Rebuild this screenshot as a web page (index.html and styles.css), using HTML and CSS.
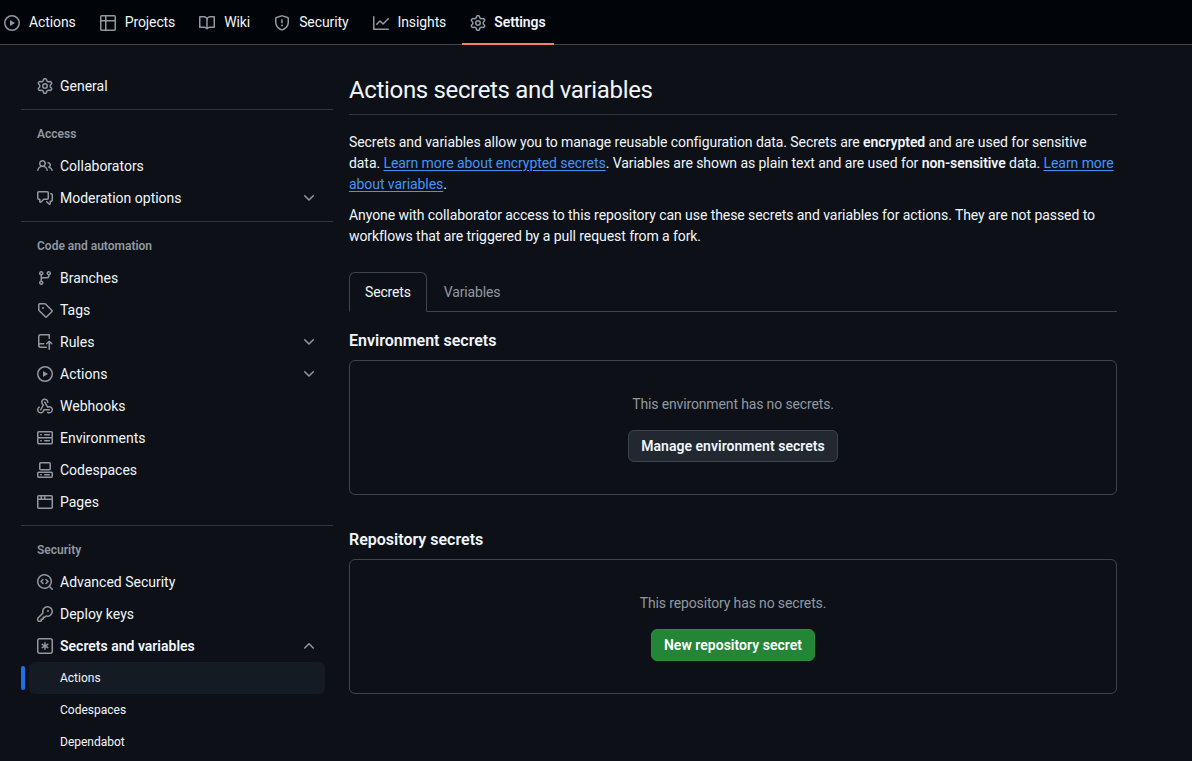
FILE: index.html
```html
<!DOCTYPE html>
<html lang="en">
<head>
<meta charset="utf-8">
<title>Actions secrets and variables</title>
<link rel="stylesheet" href="styles.css">
</head>
<body>
<svg class="sprite" aria-hidden="true">
<symbol id="i-play" viewBox="0 0 16 16"><path d="M8 0a8 8 0 1 1 0 16A8 8 0 0 1 8 0ZM1.5 8a6.5 6.5 0 1 0 13 0 6.5 6.5 0 0 0-13 0Zm4.879-2.773 4.264 2.559a.25.25 0 0 1 0 .428l-4.264 2.559A.25.25 0 0 1 6 10.559V5.442a.25.25 0 0 1 .379-.215Z"/></symbol>
<symbol id="i-table" viewBox="0 0 16 16"><path d="M0 1.75C0 .784.784 0 1.75 0h12.5C15.216 0 16 .784 16 1.75v12.5A1.75 1.75 0 0 1 14.25 16H1.75A1.75 1.75 0 0 1 0 14.25ZM6.5 6.5v8h7.75a.25.25 0 0 0 .25-.25V6.5Zm8-1.5V1.75a.25.25 0 0 0-.25-.25H6.5V5Zm-13 1.5v7.75c0 .138.112.25.25.25H5v-8ZM5 5V1.5H1.75a.25.25 0 0 0-.25.25V5Z"/></symbol>
<symbol id="i-book" viewBox="0 0 16 16"><path d="M0 1.75A.75.75 0 0 1 .75 1h4.253c1.227 0 2.317.59 3 1.501A3.743 3.743 0 0 1 11.006 1h4.245a.75.75 0 0 1 .75.75v10.5a.75.75 0 0 1-.75.75h-4.507a2.25 2.25 0 0 0-1.591.659l-.622.621a.75.75 0 0 1-1.06 0l-.622-.621A2.25 2.25 0 0 0 5.258 13H.75a.75.75 0 0 1-.75-.75Zm7.251 10.324.004-5.073-.002-2.253A2.25 2.25 0 0 0 5.003 2.5H1.5v9h3.757a3.75 3.75 0 0 1 1.994.574ZM8.755 4.75l-.004 7.322a3.752 3.752 0 0 1 1.992-.572H14.5v-9h-3.495a2.25 2.25 0 0 0-2.25 2.25Z"/></symbol>
<symbol id="i-shield" viewBox="0 0 16 16"><path d="M7.467.133a1.748 1.748 0 0 1 1.066 0l5.25 1.68A1.75 1.75 0 0 1 15 3.48V7c0 1.566-.32 3.182-1.303 4.682-.983 1.498-2.585 2.813-5.032 3.855a1.697 1.697 0 0 1-1.33 0c-2.447-1.042-4.049-2.357-5.032-3.855C1.32 10.182 1 8.566 1 7V3.48a1.75 1.75 0 0 1 1.217-1.667Zm.61 1.429a.25.25 0 0 0-.153 0l-5.25 1.68a.25.25 0 0 0-.174.238V7c0 1.358.275 2.666 1.057 3.86.784 1.194 2.121 2.34 4.366 3.297a.196.196 0 0 0 .154 0c2.245-.956 3.582-2.104 4.366-3.298C13.225 9.666 13.5 8.36 13.5 7V3.48a.251.251 0 0 0-.174-.237l-5.25-1.68ZM8.75 4.75v3a.75.75 0 0 1-1.5 0v-3a.75.75 0 0 1 1.5 0ZM9 10.5a1 1 0 1 1-2 0 1 1 0 0 1 2 0Z"/></symbol>
<symbol id="i-graph" viewBox="0 0 16 16"><path d="M1.5 1.75V13.5h13.75a.75.75 0 0 1 0 1.5H.75a.75.75 0 0 1-.75-.75V1.75a.75.75 0 0 1 1.5 0Zm14.28 2.53-5.25 5.25a.75.75 0 0 1-1.06 0L7 7.06 4.28 9.78a.751.751 0 0 1-1.042-.018.751.751 0 0 1-.018-1.042l3.25-3.25a.75.75 0 0 1 1.06 0L10 7.94l4.72-4.72a.751.751 0 0 1 1.042.018.751.751 0 0 1 .018 1.042Z"/></symbol>
<symbol id="i-gear" viewBox="0 0 16 16"><path d="M8 0a8.2 8.2 0 0 1 .701.031C9.444.095 9.99.645 10.16 1.29l.288 1.107c.018.066.079.158.212.224.231.114.454.243.668.386.123.082.233.09.299.071l1.103-.303c.644-.176 1.392.021 1.82.63.27.385.506.792.704 1.218.315.675.111 1.422-.364 1.891l-.814.806c-.049.048-.098.147-.088.294.016.257.016.515 0 .772-.01.147.038.246.088.294l.814.806c.475.469.679 1.216.364 1.891a7.977 7.977 0 0 1-.704 1.217c-.428.61-1.176.807-1.82.63l-1.102-.302c-.067-.019-.177-.011-.3.071a5.909 5.909 0 0 1-.668.386c-.133.066-.194.158-.211.224l-.29 1.106c-.168.646-.715 1.196-1.458 1.26a8.006 8.006 0 0 1-1.402 0c-.743-.064-1.289-.614-1.458-1.26l-.289-1.106c-.018-.066-.079-.158-.212-.224a5.738 5.738 0 0 1-.668-.386c-.123-.082-.233-.09-.299-.071l-1.103.303c-.644.176-1.392-.021-1.82-.63a8.12 8.12 0 0 1-.704-1.218c-.315-.675-.111-1.422.363-1.891l.815-.806c.05-.048.098-.147.088-.294a6.214 6.214 0 0 1 0-.772c.01-.147-.038-.246-.088-.294l-.815-.806C.635 6.045.431 5.298.746 4.623a7.92 7.92 0 0 1 .704-1.217c.428-.61 1.176-.807 1.82-.63l1.102.302c.067.019.177.011.3-.071.214-.143.437-.272.668-.386.133-.066.194-.158.211-.224l.29-1.106C6.009.645 6.556.095 7.299.03 7.53.01 7.764 0 8 0Zm-.571 1.525c-.036.003-.108.036-.137.146l-.289 1.105c-.147.561-.549.967-.998 1.189-.173.086-.34.183-.5.29-.417.278-.97.423-1.529.27l-1.103-.303c-.109-.03-.175.016-.195.045-.22.312-.412.644-.573.99-.014.031-.021.11.059.19l.815.806c.411.406.562.957.53 1.456a4.709 4.709 0 0 0 0 .582c.032.499-.119 1.05-.53 1.456l-.815.806c-.081.08-.073.159-.059.19.162.346.353.677.573.989.02.03.085.076.195.046l1.102-.303c.56-.153 1.113-.008 1.53.27.161.107.328.204.501.29.447.222.85.629.997 1.189l.289 1.105c.029.109.101.143.137.146a6.6 6.6 0 0 0 1.142 0c.036-.003.108-.036.137-.146l.289-1.105c.147-.561.549-.967.998-1.189.173-.086.34-.183.5-.29.417-.278.97-.423 1.529-.27l1.103.303c.109.029.175-.016.195-.045.22-.313.411-.644.573-.99.014-.031.021-.11-.059-.19l-.815-.806c-.411-.406-.562-.957-.53-1.456a4.709 4.709 0 0 0 0-.582c-.032-.499.119-1.05.53-1.456l.815-.806c.081-.08.073-.159.059-.19a6.464 6.464 0 0 0-.573-.989c-.02-.03-.085-.076-.195-.046l-1.102.303c-.56.153-1.113.008-1.53-.27a4.44 4.44 0 0 0-.501-.29c-.447-.222-.85-.629-.997-1.189l-.289-1.105c-.029-.11-.101-.143-.137-.146a6.6 6.6 0 0 0-1.142 0ZM11 8a3 3 0 1 1-6 0 3 3 0 0 1 6 0ZM9.5 8a1.5 1.5 0 1 0-3.001.001A1.5 1.5 0 0 0 9.5 8Z"/></symbol>
<symbol id="i-people" viewBox="0 0 16 16"><path d="M2 5.5a3.5 3.5 0 1 1 5.898 2.549 5.508 5.508 0 0 1 3.034 4.084.75.75 0 1 1-1.482.235 4 4 0 0 0-7.9 0 .75.75 0 0 1-1.482-.236A5.507 5.507 0 0 1 3.102 8.05 3.493 3.493 0 0 1 2 5.5ZM11 4a3.001 3.001 0 0 1 2.22 5.018 5.01 5.01 0 0 1 2.56 3.012.749.749 0 0 1-.885.954.752.752 0 0 1-.549-.514 3.507 3.507 0 0 0-2.522-2.372.75.75 0 0 1-.574-.73v-.352a.75.75 0 0 1 .416-.672A1.5 1.5 0 0 0 11 5.5.75.75 0 0 1 11 4Zm-5.5-.5a2 2 0 1 0-.001 3.999A2 2 0 0 0 5.5 3.5Z"/></symbol>
<symbol id="i-comment" viewBox="0 0 16 16"><path d="M1.75 1h8.5c.966 0 1.75.784 1.75 1.75v5.5A1.75 1.75 0 0 1 10.25 10H7.061l-2.574 2.573A1.458 1.458 0 0 1 2 11.543V10h-.25A1.75 1.75 0 0 1 0 8.25v-5.5C0 1.784.784 1 1.75 1ZM1.5 2.75v5.5c0 .138.112.25.25.25h1a.75.75 0 0 1 .75.75v2.19l2.72-2.72a.749.749 0 0 1 .53-.22h3.5a.25.25 0 0 0 .25-.25v-5.5a.25.25 0 0 0-.25-.25h-8.5a.25.25 0 0 0-.25.25Zm13 2a.25.25 0 0 0-.25-.25h-.5a.75.75 0 0 1 0-1.5h.5c.966 0 1.75.784 1.75 1.75v5.5A1.75 1.75 0 0 1 14.25 12H14v1.543a1.458 1.458 0 0 1-2.487 1.03L9.22 12.28a.749.749 0 0 1 .326-1.275.749.749 0 0 1 .734.215l2.22 2.22v-2.19a.75.75 0 0 1 .75-.75h1a.25.25 0 0 0 .25-.25Z"/></symbol>
<symbol id="i-branch" viewBox="0 0 16 16"><path d="M9.5 3.25a2.25 2.25 0 1 1 3 2.122V6A2.5 2.5 0 0 1 10 8.5H6a1 1 0 0 0-1 1v1.128a2.251 2.251 0 1 1-1.5 0V5.372a2.25 2.25 0 1 1 1.5 0v1.836A2.493 2.493 0 0 1 6 7h4a1 1 0 0 0 1-1v-.628A2.25 2.25 0 0 1 9.5 3.25Zm-6 0a.75.75 0 1 0 1.5 0 .75.75 0 0 0-1.5 0Zm8.25-.75a.75.75 0 1 0 0 1.5.75.75 0 0 0 0-1.5ZM4.25 12a.75.75 0 1 0 0 1.5.75.75 0 0 0 0-1.5Z"/></symbol>
<symbol id="i-tag" viewBox="0 0 16 16"><path d="M1 7.775V2.75C1 1.784 1.784 1 2.75 1h5.025c.464 0 .91.184 1.238.513l6.25 6.25a1.75 1.75 0 0 1 0 2.474l-5.026 5.026a1.75 1.75 0 0 1-2.474 0l-6.25-6.25A1.752 1.752 0 0 1 1 7.775Zm1.5 0c0 .066.026.13.073.177l6.25 6.25a.25.25 0 0 0 .354 0l5.025-5.025a.25.25 0 0 0 0-.354l-6.25-6.25a.25.25 0 0 0-.177-.073H2.75a.25.25 0 0 0-.25.25ZM6 5a1 1 0 1 1 0 2 1 1 0 0 1 0-2Z"/></symbol>
<symbol id="i-push" viewBox="0 0 16 16"><path d="M1 2.5A2.5 2.5 0 0 1 3.5 0h8.75a.75.75 0 0 1 .75.75v3.5a.75.75 0 0 1-1.5 0V1.5h-8a1 1 0 0 0-1 1v6.708A2.493 2.493 0 0 1 3.5 9h3.25a.75.75 0 0 1 0 1.5H3.5a1 1 0 0 0 0 2h5.75a.75.75 0 0 1 0 1.5H3.5A2.5 2.5 0 0 1 1 11.5Zm13.23 7.79h-.001l-1.224-1.224v6.184a.75.75 0 0 1-1.5 0V9.066L10.28 10.29a.75.75 0 0 1-1.06-1.061l2.505-2.504a.75.75 0 0 1 1.06 0L15.29 9.23a.751.751 0 0 1-.018 1.042.751.751 0 0 1-1.042.018Z"/></symbol>
<symbol id="i-webhook" viewBox="0 0 16 16"><path d="M5.5 4.25a2.25 2.25 0 0 1 4.5 0 .75.75 0 0 0 1.5 0 3.75 3.75 0 1 0-6.14 2.889l-2.272 4.258a.75.75 0 0 0 1.324.706L7 7.25a.75.75 0 0 0-.309-1.015A2.25 2.25 0 0 1 5.5 4.25Z"/><path d="M7.364 3.607a.75.75 0 0 1 1.03.257l2.608 4.349a3.75 3.75 0 1 1-.628 6.785.75.75 0 0 1 .752-1.299 2.25 2.25 0 1 0-.033-3.88.75.75 0 0 1-1.03-.256L7.107 4.636a.75.75 0 0 1 .257-1.03Z"/><path d="M2.9 8.776A.75.75 0 0 1 2.625 9.8 2.25 2.25 0 1 0 6 11.75a.75.75 0 0 1 .75-.751h5.5a.75.75 0 0 1 0 1.5H7.425a3.751 3.751 0 1 1-5.55-3.998.75.75 0 0 1 1.024.274Z"/></symbol>
<symbol id="i-server" viewBox="0 0 16 16"><path d="M1.75 1h12.5c.966 0 1.75.784 1.75 1.75v4c0 .372-.116.717-.314 1 .198.283.314.628.314 1v4a1.75 1.75 0 0 1-1.75 1.75H1.75A1.75 1.75 0 0 1 0 12.75v-4c0-.358.109-.707.314-1a1.739 1.739 0 0 1-.314-1v-4C0 1.784.784 1 1.75 1ZM1.5 2.75v4c0 .138.112.25.25.25h12.5a.25.25 0 0 0 .25-.25v-4a.25.25 0 0 0-.25-.25H1.75a.25.25 0 0 0-.25.25Zm.25 5.75a.25.25 0 0 0-.25.25v4c0 .138.112.25.25.25h12.5a.25.25 0 0 0 .25-.25v-4a.25.25 0 0 0-.25-.25ZM7 4.75A.75.75 0 0 1 7.75 4h4.5a.75.75 0 0 1 0 1.5h-4.5A.75.75 0 0 1 7 4.75ZM7.75 10h4.5a.75.75 0 0 1 0 1.5h-4.5a.75.75 0 0 1 0-1.5ZM3 4.75A.75.75 0 0 1 3.75 4h.5a.75.75 0 0 1 0 1.5h-.5A.75.75 0 0 1 3 4.75ZM3.75 10h.5a.75.75 0 0 1 0 1.5h-.5a.75.75 0 0 1 0-1.5Z"/></symbol>
<symbol id="i-codespaces" viewBox="0 0 16 16"><path d="M0 11.25c0-.966.784-1.75 1.75-1.75h12.5c.966 0 1.75.784 1.75 1.75v3A1.75 1.75 0 0 1 14.25 16H1.75A1.75 1.75 0 0 1 0 14.25Zm2-9.5C2 .784 2.784 0 3.75 0h8.5C13.216 0 14 .784 14 1.75v5a1.75 1.75 0 0 1-1.75 1.75h-8.5A1.75 1.75 0 0 1 2 6.75Zm1.75-.25a.25.25 0 0 0-.25.25v5c0 .138.112.25.25.25h8.5a.25.25 0 0 0 .25-.25v-5a.25.25 0 0 0-.25-.25Zm-2 9.5a.25.25 0 0 0-.25.25v3c0 .138.112.25.25.25h12.5a.25.25 0 0 0 .25-.25v-3a.25.25 0 0 0-.25-.25Z"/><path d="M7 12.75a.75.75 0 0 1 .75-.75h4.5a.75.75 0 0 1 0 1.5h-4.5a.75.75 0 0 1-.75-.75Zm-4 0a.75.75 0 0 1 .75-.75h.5a.75.75 0 0 1 0 1.5h-.5a.75.75 0 0 1-.75-.75Z"/></symbol>
<symbol id="i-browser" viewBox="0 0 16 16"><path d="M0 2.75C0 1.784.784 1 1.75 1h12.5c.966 0 1.75.784 1.75 1.75v10.5A1.75 1.75 0 0 1 14.25 15H1.75A1.75 1.75 0 0 1 0 13.25ZM14.5 6h-13v7.25c0 .138.112.25.25.25h12.5a.25.25 0 0 0 .25-.25Zm-6-3.5v2h6V2.75a.25.25 0 0 0-.25-.25ZM5 2.5v2h2v-2Zm-3.25 0a.25.25 0 0 0-.25.25V4.5h2v-2Z"/></symbol>
<symbol id="i-codescan" viewBox="0 0 16 16"><path d="M8.47 4.97a.75.75 0 0 0 0 1.06L9.94 7.5 8.47 8.97a.75.75 0 1 0 1.06 1.06l2-2a.75.75 0 0 0 0-1.06l-2-2a.75.75 0 0 0-1.06 0ZM6.53 6.03a.75.75 0 0 0-1.06-1.06l-2 2a.75.75 0 0 0 0 1.06l2 2a.75.75 0 1 0 1.06-1.06L5.06 7.5l1.47-1.47Z"/><path d="M12.246 13.307a7.501 7.501 0 1 1 1.06-1.06l2.474 2.473a.749.749 0 0 1-.326 1.275.749.749 0 0 1-.734-.215ZM1.5 7.5a6.002 6.002 0 0 0 3.608 5.504 6.002 6.002 0 0 0 6.486-1.117.748.748 0 0 1 .292-.293A6 6 0 1 0 1.5 7.5Z"/></symbol>
<symbol id="i-key" viewBox="0 0 16 16"><path d="M10.5 0a5.499 5.499 0 1 1-1.288 10.848l-.932.932a.749.749 0 0 1-.53.22H7v.75a.749.749 0 0 1-.22.53l-.5.5a.749.749 0 0 1-.53.22H5v.75a.749.749 0 0 1-.22.53l-.5.5a.749.749 0 0 1-.53.22h-2A1.75 1.75 0 0 1 0 14.25v-2c0-.199.079-.389.22-.53l4.932-4.932A5.5 5.5 0 0 1 10.5 0Zm-4 5.5c-.001.431.069.86.205 1.269a.75.75 0 0 1-.181.768L1.5 12.56v1.69c0 .138.112.25.25.25h1.69l.06-.06v-1.19a.75.75 0 0 1 .75-.75h1.19l.06-.06v-1.19a.75.75 0 0 1 .75-.75h1.19l1.023-1.025a.75.75 0 0 1 .768-.18A4 4 0 1 0 6.5 5.5ZM11 6a1 1 0 1 1 0-2 1 1 0 0 1 0 2Z"/></symbol>
<symbol id="i-asterisk" viewBox="0 0 16 16"><path d="M0 2.75A2.75 2.75 0 0 1 2.75 0h10.5A2.75 2.75 0 0 1 16 2.75v10.5A2.75 2.75 0 0 1 13.25 16H2.75A2.75 2.75 0 0 1 0 13.25ZM2.75 1.5c-.69 0-1.25.56-1.25 1.25v10.5c0 .69.56 1.25 1.25 1.25h10.5c.69 0 1.25-.56 1.25-1.25V2.75c0-.69-.56-1.25-1.25-1.25Z"/><path d="M8 4a.75.75 0 0 1 .75.75V6.7l1.69-.975a.75.75 0 0 1 .75 1.3L9.5 8l1.69.976a.75.75 0 0 1-.75 1.298L8.75 9.3v1.951a.75.75 0 0 1-1.5 0V9.299l-1.69.976a.75.75 0 0 1-.75-1.3L6.5 8l-1.69-.975a.75.75 0 0 1 .75-1.3l1.69.976V4.75A.75.75 0 0 1 8 4Z"/></symbol>
<symbol id="i-down" viewBox="0 0 16 16"><path d="M12.78 5.22a.749.749 0 0 1 0 1.06l-4.25 4.25a.749.749 0 0 1-1.06 0L3.22 6.28a.749.749 0 1 1 1.06-1.06L8 8.939l3.72-3.719a.749.749 0 0 1 1.06 0Z"/></symbol>
<symbol id="i-up" viewBox="0 0 16 16"><path d="M3.22 10.53a.749.749 0 0 1 0-1.06l4.25-4.25a.749.749 0 0 1 1.06 0l4.25 4.25a.749.749 0 1 1-1.06 1.06L8 6.811 4.28 10.53a.749.749 0 0 1-1.06 0Z"/></symbol>
</svg>

<nav class="topnav">
  <a class="tab-item"><svg class="icon"><use href="#i-play"/></svg>Actions</a>
  <a class="tab-item"><svg class="icon"><use href="#i-table"/></svg>Projects</a>
  <a class="tab-item"><svg class="icon"><use href="#i-book"/></svg>Wiki</a>
  <a class="tab-item"><svg class="icon"><use href="#i-shield"/></svg>Security</a>
  <a class="tab-item"><svg class="icon"><use href="#i-graph"/></svg>Insights</a>
  <a class="tab-item current"><svg class="icon"><use href="#i-gear"/></svg>Settings</a>
</nav>

<div class="layout">
  <aside class="sidebar">
    <a class="row"><svg class="icon"><use href="#i-gear"/></svg>General</a>
    <hr class="divider">
    <h3 class="group-title">Access</h3>
    <a class="row"><svg class="icon"><use href="#i-people"/></svg>Collaborators</a>
    <a class="row"><svg class="icon"><use href="#i-comment"/></svg>Moderation options<svg class="icon chev"><use href="#i-down"/></svg></a>
    <hr class="divider">
    <h3 class="group-title">Code and automation</h3>
    <a class="row"><svg class="icon"><use href="#i-branch"/></svg>Branches</a>
    <a class="row"><svg class="icon"><use href="#i-tag"/></svg>Tags</a>
    <a class="row"><svg class="icon"><use href="#i-push"/></svg>Rules<svg class="icon chev"><use href="#i-down"/></svg></a>
    <a class="row"><svg class="icon"><use href="#i-play"/></svg>Actions<svg class="icon chev"><use href="#i-down"/></svg></a>
    <a class="row"><svg class="icon"><use href="#i-webhook"/></svg>Webhooks</a>
    <a class="row"><svg class="icon"><use href="#i-server"/></svg>Environments</a>
    <a class="row"><svg class="icon"><use href="#i-codespaces"/></svg>Codespaces</a>
    <a class="row"><svg class="icon"><use href="#i-browser"/></svg>Pages</a>
    <hr class="divider">
    <h3 class="group-title">Security</h3>
    <a class="row"><svg class="icon"><use href="#i-codescan"/></svg>Advanced Security</a>
    <a class="row"><svg class="icon"><use href="#i-key"/></svg>Deploy keys</a>
    <a class="row strong"><svg class="icon"><use href="#i-asterisk"/></svg>Secrets and variables<svg class="icon chev"><use href="#i-up"/></svg></a>
    <a class="row sub active">Actions</a>
    <a class="row sub">Codespaces</a>
    <a class="row sub">Dependabot</a>
  </aside>

  <main class="content">
    <h1 class="page-title">Actions secrets and variables</h1>
    <p class="lead">Secrets and variables allow you to manage reusable configuration data. Secrets are <strong>encrypted</strong> and are used for sensitive data. <a class="link">Learn more about encrypted secrets</a>. Variables are shown as plain text and are used for <strong>non-sensitive</strong> data. <a class="link">Learn more about variables</a>.</p>
    <p class="lead">Anyone with collaborator access to this repository can use these secrets and variables for actions. They are not passed to workflows that are triggered by a pull request from a fork.</p>
    <div class="tabs">
      <a class="tab selected">Secrets</a>
      <a class="tab">Variables</a>
    </div>
    <h2 class="section-title first">Environment secrets</h2>
    <section class="blank">
      <p class="blank-text">This environment has no secrets.</p>
      <a class="btn">Manage environment secrets</a>
    </section>
    <h2 class="section-title">Repository secrets</h2>
    <section class="blank">
      <p class="blank-text">This repository has no secrets.</p>
      <a class="btn primary">New repository secret</a>
    </section>
  </main>
</div>
</body>
</html>
```

FILE: styles.css
```css
* { box-sizing: border-box; }
html, body { margin: 0; padding: 0; }
body {
  background: #0d1117;
  color: #f0f6fc;
  font-family: "Roboto", "Liberation Sans", sans-serif;
  font-size: 14px;
  line-height: 21px;
  height: 761px;
  overflow: hidden;
}
.sprite { display: none; }
.icon { width: 16px; height: 16px; fill: #9198a1; flex: none; }

.topnav {
  display: flex;
  height: 45px;
  background: #010409;
  border-bottom: 1px solid #3d444d;
  letter-spacing: -0.1px;
}
.tab-item {
  display: flex;
  align-items: center;
  gap: 9px;
  height: 45px;
  padding: 0 8px;
  margin-right: 8px;
  position: relative;
}
.tab-item:first-child { margin-left: -4px; }
.tab-item.current { font-weight: 600; gap: 8px; }
.tab-item.current::after {
  content: "";
  position: absolute;
  left: 0;
  right: 0;
  bottom: 0;
  height: 2px;
  background: #f78166;
}

.layout { display: flex; padding: 25px 0 0 21px; }
.sidebar { width: 312px; flex: none; }
.row {
  display: flex;
  align-items: center;
  gap: 7px;
  height: 32px;
  padding: 0 16px;
  position: relative;
}
.chev { margin-left: auto; }
.row.strong { font-weight: 600; }
.row.sub { margin: 0 8px; padding-left: 31px; font-size: 12px; border-radius: 6px; }
.row.active { background: #151b23; }
.row.active::before {
  content: "";
  position: absolute;
  left: -8px;
  top: 4px;
  width: 4px;
  height: 24px;
  border-radius: 6px;
  background: #1f6feb;
}
.divider { height: 1px; margin: 7px 0 0; border: 0; background: #3d444db3; }
.group-title {
  margin: 0;
  padding: 16px 16px 8px;
  font-size: 12px;
  line-height: 16px;
  font-weight: 600;
  color: #9198a1;
}

.content { width: 768px; margin-left: 16px; flex: none; }
.page-title {
  margin: 0 0 17px;
  height: 45px;
  padding-top: 1px;
  font-size: 24px;
  line-height: 38px;
  font-weight: 400;
  letter-spacing: -0.34px;
  border-bottom: 1px solid #3d444db3;
}
.lead { margin: 0 0 10px; letter-spacing: -0.07px; }
.lead strong { font-weight: 600; }
.link { color: #4493f8; text-decoration: underline; text-underline-offset: 2px; }

.tabs {
  display: flex;
  height: 40px;
  margin-top: 25px;
  border-bottom: 1px solid #3d444d;
  letter-spacing: -0.15px;
}
.tab {
  display: flex;
  align-items: center;
  height: 40px;
  padding: 0 16px;
  color: #9198a1;
  border: 1px solid transparent;
  border-radius: 6px 6px 0 0;
}
.tab.selected { padding: 0 15px; color: #f0f6fc; background: #0d1117; border-color: #3d444d; border-bottom-color: #0d1117; }

.section-title { margin: 33px 0 7px; font-size: 16px; line-height: 24px; font-weight: 600; }
.section-title.first { margin-top: 17px; }
.blank {
  height: 135px;
  border: 1px solid #3d444d;
  border-radius: 6px;
  display: flex;
  flex-direction: column;
  align-items: center;
  padding-top: 33px;
}
.blank-text { margin: 0 0 15px; color: #9198a1; letter-spacing: -0.14px; }
.btn {
  display: flex;
  align-items: center;
  height: 32px;
  padding: 0 12px;
  font-weight: 600;
  letter-spacing: 0.03px;
  border: 1px solid #3d444d;
  border-radius: 6px;
  background: #212830;
}
.btn.primary { background: #238636; border-color: #2a8c3c; color: #fff; }
```
